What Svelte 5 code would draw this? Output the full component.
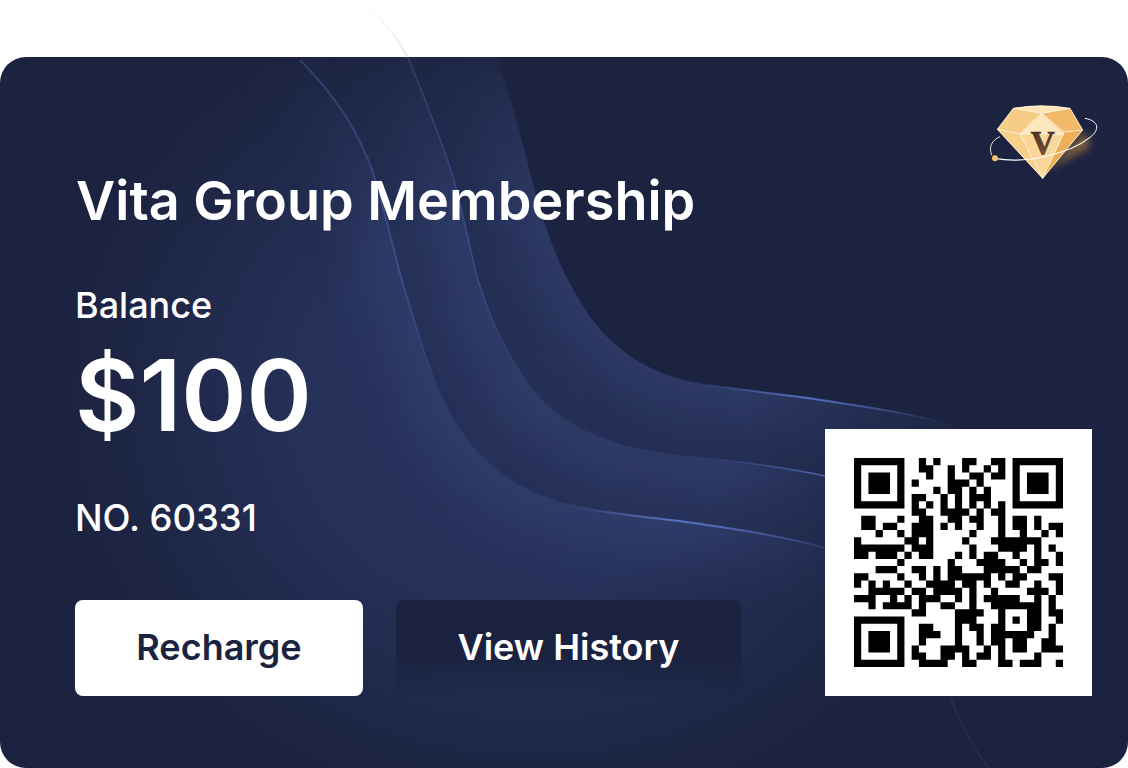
<script lang="ts">
  // black modules per row of the QR, finder squares get added below
  const rows = [
    [9,11,15,16,19,20],
    [9,10,13,15,18,20],
    [10,13,16,17,19,20],
    [8,13,14,15,17],
    [11,13,14,16,18],
    [8,9,12,14,16,17,18],
    [8,10,12,14,16,18,20],
    [8,9,12,13,14,15,17,19,20],
    [1,2,6,9,10,13,14,16,17,20,22,23,25],
    [1,2,4,5,8,9,10,12,14,17,20,22,23,25,27,28],
    [3,6,8,9,10,16,20,23,26,28],
    [0,7,8,10,15,19,20,21,22,23,24,25],
    [0,1,2,3,4,5,6,8,9,10,16,20,21,22,23,25,27],
    [0,1,3,4,5,7,9,10,14,16,18,19,22,25,28],
    [6,13,17,18,19,20,23,25,26,28],
    [3,4,5,8,9,11,13,14,18,19,20,21,22,24,25],
    [0,1,6,9,11,13,14,15,16,17,18,20,22,23,27,28],
    [0,2,4,7,10,11,12,13,15,16,18,21,22,25,28],
    [2,3,4,5,6,8,9,11,12,13,14,16,19,24,25,26,28],
    [0,1,2,5,7,9,10,11,14,16,18,19,20,21,22,25,27],
    [2,4,5,6,7,9,12,13,16,19,20,21,22,23,24,25,27],
    [8,9,14,15,16,17,20,24,25,27,28],
    [14,15,16,20,22,24,25,28],
    [9,10,14,16,17,19,20,24,25,27],
    [9,10,11,14,17,19,20,21,22,23,24,27],
    [9,14,17,19,20,22,23,26,27],
    [8,12,13,14,15,18,20,22,23,26,27,28],
    [8,9,12,13,15,17,18,20,25],
    [9,10,11,12,15,16,20,21,23,24,25,28]
  ];

  function finder(x: number, y: number) {
    return `M${x} ${y}h7v7h-7zM${x + 1} ${y + 1}v5h5v-5zM${x + 2} ${y + 2}h3v3h-3z`;
  }

  const modules = rows
    .map((cols, y) => cols.map((x) => `M${x} ${y}h1v1h-1z`).join(''))
    .join('');
  const qrPath = modules + finder(0, 0) + finder(22, 0) + finder(0, 22);

  const edgeA = 'M497 57C507 90 513 105 520 133C530 170 537 205 547 230C553 248 560 265 568 280C580 302 592 322 607 337C625 355 650 370 673 377C690 382 705 385 723 387C765 393 805 397 840 403C880 409 925 416 957 427';
  const edgeB = 'M408 57C425 100 442 140 453 177C463 212 470 250 478 280C486 305 495 330 507 350C520 375 535 397 553 410C575 428 600 438 623 445C650 452 680 455 707 458C750 463 790 468 825 476';
  const edgeC = 'M300 60C340 100 362 140 373 173C388 220 395 260 407 297C420 340 430 370 437 387C452 420 470 445 483 457C502 476 525 490 547 497C570 506 590 510 607 512C640 517 675 520 707 525C750 531 790 538 825 548';
  const close = 'L1128 470L1128 768L0 768L0 57Z';
  const bands = [
    { id: 'a', edge: edgeA, fill: 0.6 },
    { id: 'b', edge: edgeB, fill: 0.3 },
    { id: 'c', edge: edgeC, fill: 0.28 }
  ];
</script>

<div class="page">
  <div class="card">
    <svg class="waves" viewBox="0 0 1128 768" aria-hidden="true">
      <defs>
        <clipPath id="cardClip"><rect x="0" y="57" width="1128" height="711" rx="26" /></clipPath>
        <radialGradient id="fade" gradientUnits="userSpaceOnUse" cx="0" cy="0" r="1" gradientTransform="translate(530 400) scale(480 430)">
          <stop offset="0" stop-color="#fff" />
          <stop offset="0.45" stop-color="#fff" stop-opacity="0.95" />
          <stop offset="0.85" stop-color="#fff" stop-opacity="0.18" />
          <stop offset="1" stop-color="#fff" stop-opacity="0" />
        </radialGradient>
        <linearGradient id="arcFade" x1="0" y1="0" x2="0" y2="1">
          <stop offset="0" stop-color="#eee" stop-opacity="0" />
          <stop offset="1" stop-color="#e8e8e8" />
        </linearGradient>
        <linearGradient id="lineA" gradientUnits="userSpaceOnUse" x1="690" y1="0" x2="950" y2="0">
          <stop offset="0" stop-color="#5470c0" stop-opacity="0" />
          <stop offset="0.45" stop-color="#5470c0" />
          <stop offset="1" stop-color="#5470c0" stop-opacity="0" />
        </linearGradient>
        <linearGradient id="lineC" gradientUnits="userSpaceOnUse" x1="560" y1="0" x2="825" y2="0">
          <stop offset="0" stop-color="#5a76c8" stop-opacity="0" />
          <stop offset="0.45" stop-color="#5a76c8" />
          <stop offset="1" stop-color="#5a76c8" stop-opacity="0.2" />
        </linearGradient>
        <linearGradient id="lineB" gradientUnits="userSpaceOnUse" x1="700" y1="0" x2="825" y2="0">
          <stop offset="0" stop-color="#5a76c8" stop-opacity="0" />
          <stop offset="1" stop-color="#5a76c8" stop-opacity="0.8" />
        </linearGradient>
        <linearGradient id="lineTop" gradientUnits="userSpaceOnUse" x1="0" y1="60" x2="0" y2="420">
          <stop offset="0" stop-color="#4a62a8" stop-opacity="0.4" />
          <stop offset="0.6" stop-color="#4a62a8" stop-opacity="0.55" />
          <stop offset="1" stop-color="#4a62a8" stop-opacity="0" />
        </linearGradient>
        <mask id="glow" maskUnits="userSpaceOnUse" x="0" y="0" width="1128" height="768">
          <rect width="1128" height="768" fill="url(#fade)" />
        </mask>
        <filter id="soft" x="-30%" y="-30%" width="160%" height="160%"><feGaussianBlur stdDeviation="26" /></filter>
        {#each bands as band}
          <clipPath id={'clip-' + band.id}><path d={band.edge + close} /></clipPath>
        {/each}
      </defs>

      <path d="M362 0C380 16 396 36 408 57" fill="none" stroke="url(#arcFade)" stroke-width="2" />

      <g clip-path="url(#cardClip)">
        <g mask="url(#glow)">
          {#each bands as band}
            <g clip-path={'url(#clip-' + band.id + ')'}>
              <rect width="1128" height="768" fill="#2c3864" opacity={band.fill} />
              <path d={band.edge} fill="none" stroke="#4a5c98" stroke-width="60" opacity="0.3" filter="url(#soft)" />
            </g>
          {/each}
        </g>
        <path d={edgeC} fill="none" stroke="url(#lineTop)" stroke-width="2" />
        <path d={edgeB} fill="none" stroke="url(#lineTop)" stroke-width="1.5" />
        <path d={edgeA} fill="none" stroke="url(#lineA)" stroke-width="2" />
        <path d={edgeB} fill="none" stroke="url(#lineB)" stroke-width="1.5" />
        <path d={edgeC} fill="none" stroke="url(#lineC)" stroke-width="2" />
        <path d="M950 696C960 725 975 750 990 770" fill="none" stroke="#232d50" stroke-width="2" />
      </g>
    </svg>

    <div class="left">
      <h1>Vita Group Membership</h1>
      <div class="label">Balance</div>
      <div class="amount">$100</div>
      <div class="number">NO. 60331</div>
      <div class="actions">
        <button class="btn primary">Recharge</button>
        <button class="btn dark">View History</button>
      </div>
    </div>

    <div class="right">
      <svg class="gem" viewBox="0 0 420 300" aria-hidden="true">
        <defs>
          <filter id="gemGlow" x="-40%" y="-40%" width="180%" height="180%"><feGaussianBlur stdDeviation="12" /></filter>
          <linearGradient id="gemV" x1="0" y1="0" x2="0" y2="1">
            <stop offset="0" stop-color="#3d2620" />
            <stop offset="1" stop-color="#8a5a3c" />
          </linearGradient>
        </defs>
        <path d="M230 240L345 125L360 170Z" fill="#e39a3c" opacity="0.55" filter="url(#gemGlow)" />
        <path d="M345 85C385 92 392 118 360 142" fill="none" stroke="#fff" stroke-width="3" />
        <path d="M90 140C66 150 54 172 66 196" fill="none" stroke="#e9e6df" stroke-width="3" />
        <path d="M130 55Q215 40 300 55L338 120L218 265L82 118Z" fill="#f6c97d" />
        <path d="M130 55L215 70L150 132L82 118Z" fill="#f7cd85" />
        <path d="M300 55L215 70L282 126L338 120Z" fill="#f2b96a" />
        <path d="M130 55Q215 40 300 55L215 70Z" fill="#fde4b4" />
        <path d="M215 70L150 132H282Z" fill="#fde7bf" />
        <path d="M150 132L218 265L82 118Z" fill="#f8d08a" />
        <path d="M282 126L218 265L338 120Z" fill="#eeaf58" />
        <path d="M150 132H282L218 265Z" fill="#f9d79a" />
        <path d="M130 55Q215 40 300 55M130 55L82 118L150 132L215 70L282 126L338 120L300 55L215 70L130 55M150 132L218 265M282 126L218 265M82 118L218 265L338 120M150 132H282" fill="none" stroke="#fff6e2" stroke-width="2.5" stroke-linejoin="round" />
        <text class="gem-v" x="218" y="192" text-anchor="middle" fill="url(#gemV)" stroke="#4a2f25" stroke-width="2">V</text>
        <path d="M78 206C170 222 300 190 360 142" fill="none" stroke="#fff" stroke-width="3.5" />
        <circle cx="75" cy="205" r="9" fill="#f3c667" />
      </svg>

      <div class="qr">
        <svg viewBox="0 0 29 29" aria-label="QR code"><path d={qrPath} fill="#000" fill-rule="evenodd" /></svg>
      </div>
    </div>
  </div>
</div>

<style>
  :global(body) {
    margin: 0;
    background: #fff;
    font-family: Inter, "Liberation Sans", sans-serif;
  }

  .page {
    width: 1128px;
    height: 768px;
    padding-top: 57px;
    box-sizing: border-box;
    overflow: hidden;
  }

  .card {
    position: relative;
    height: 711px;
    box-sizing: border-box;
    background: #1c2340;
    border-radius: 26px;
    display: flex;
    justify-content: space-between;
    padding: 0 36px 72px 75px;
  }

  .waves {
    position: absolute;
    top: -57px;
    left: 0;
    width: 1128px;
    height: 768px;
    pointer-events: none;
  }

  .left {
    position: relative;
    display: flex;
    flex-direction: column;
    color: #fff;
  }

  h1 {
    margin: 112px 0 0 1px;
    font-size: 54px;
    line-height: 63px;
    font-weight: 600;
    white-space: nowrap;
  }

  .label {
    margin: 51px 0 0 0;
    font-size: 36px;
    line-height: 44px;
    font-weight: 500;
  }

  .amount {
    margin: 20px 0 0 0;
    font-size: 99px;
    line-height: 96px;
    font-weight: 600;
  }

  .number {
    margin: 53px 0 0 0;
    font-size: 36.5px;
    line-height: 44px;
    font-weight: 500;
  }

  .actions {
    margin-top: auto;
    display: flex;
    gap: 33px;
  }

  .btn {
    height: 96px;
    border: 0;
    border-radius: 8px;
    font-family: inherit;
    font-size: 36px;
    font-weight: 600;
    padding: 0 0 2px;
  }

  .primary {
    width: 288px;
    background: #fff;
    color: #1c2340;
  }

  .dark {
    width: 345px;
    background: linear-gradient(#1b2240, #1b2240 55%, rgba(27, 34, 64, 0.1));
    color: #fff;
  }

  .right {
    position: relative;
    display: flex;
    flex-direction: column;
    justify-content: space-between;
    align-items: flex-end;
  }

  .gem {
    width: 140px;
    height: 100px;
    margin: 33px -18px 0 0;
  }

  .gem-v {
    font-family: "Liberation Serif", serif;
    font-weight: 700;
    font-size: 100px;
  }

  .qr {
    width: 267px;
    height: 267px;
    box-sizing: border-box;
    padding: 29px;
    background: #fff;
  }

  .qr svg {
    display: block;
    width: 209px;
    height: 209px;
  }
</style>
